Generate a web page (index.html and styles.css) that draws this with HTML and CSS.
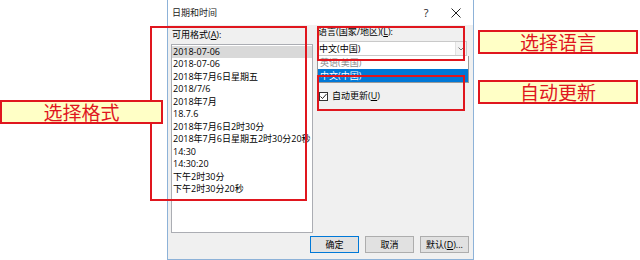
FILE: index.html
```html
<!DOCTYPE html>
<html lang="zh-CN">
<head>
  <meta charset="UTF-8">
  <meta name="viewport" content="width=device-width, initial-scale=1.0">
  <title>日期和时间</title>
  <link rel="stylesheet" href="styles.css">
</head>
<body>

  <div class="dialog">
    <div class="titlebar">
      <span class="title">日期和时间</span>
      <span class="title-btn">?</span>
      <span class="title-btn close">
        <svg width="10" height="10" viewBox="0 0 10 10"><path d="M0.5 0.5 L9.5 9.5 M9.5 0.5 L0.5 9.5" stroke="#222" stroke-width="1" fill="none"/></svg>
      </span>
    </div>

    <div class="body">
      <div class="panes">
        <div class="formats">
          <div class="label">可用格式(<u>A</u>):</div>
          <ul class="listbox">
            <li class="selected">2018-07-06</li>
            <li>2018-07-06</li>
            <li>2018年7月6日星期五</li>
            <li>2018/7/6</li>
            <li>2018年7月</li>
            <li>18.7.6</li>
            <li>2018年7月6日2时30分</li>
            <li>2018年7月6日星期五2时30分20秒</li>
            <li>14:30</li>
            <li>14:30:20</li>
            <li>下午2时30分</li>
            <li>下午2时30分20秒</li>
          </ul>
        </div>

        <div class="options">
          <div class="label">语言(国家/地区)(<u>L</u>):</div>
          <div class="combo-wrap">
            <div class="combo">
              <span>中文(中国)</span>
              <span class="arrow">
                <svg width="6" height="4" viewBox="0 0 6 4"><path d="M0.5 0.5 L3 3 L5.5 0.5" stroke="#777" stroke-width="1" fill="none"/></svg>
              </span>
            </div>
            <ul class="dropdown">
              <li class="faded">英语(美国)</li>
              <li class="current">中文(中国)</li>
            </ul>
          </div>
          <label class="check">
            <span class="box">
              <svg width="7" height="7" viewBox="0 0 7 7"><path d="M0.5 3.5 L2.5 5.5 L6.5 1" stroke="#222" stroke-width="1" fill="none"/></svg>
            </span>
            <span>自动更新(<u>U</u>)</span>
          </label>
        </div>
      </div>

      <div class="buttons">
        <button class="btn default">确定</button>
        <button class="btn">取消</button>
        <button class="btn">默认(<u>D</u>)...</button>
      </div>
    </div>
  </div>

  <!-- annotations drawn over the screenshot -->
  <div class="mark mark-formats"></div>
  <div class="mark mark-language"></div>
  <div class="mark mark-update"></div>

  <div class="callout callout-formats">选择格式</div>
  <div class="callout callout-language">选择语言</div>
  <div class="callout callout-update">自动更新</div>

</body>
</html>
```

FILE: styles.css
```css
html, body {
  margin: 0;
  padding: 0;
  overflow: hidden;
}

body {
  width: 640px;
  height: 260px;
  background-color: #fff;
  font-family: "Open Sans", "Noto Sans CJK SC", sans-serif;
  font-size: 9px;
  color: #000;
  position: relative;
}

ul {
  list-style: none;
  margin: 0;
  padding: 0;
}

.dialog {
  margin-left: 167px;
  width: 305px;
  height: 259px;
  border: 1px solid #8db2d8;
  border-top: none;
  display: flex;
  flex-direction: column;
}

.titlebar {
  height: 25px;
  background-color: #fff;
  display: flex;
  align-items: center;
  padding-right: 2px;
}

.title {
  flex: 1;
  padding-left: 4px;
  color: #222;
}

.title-btn {
  width: 30px;
  text-align: center;
  font-size: 11px;
  color: #222;
  display: flex;
  justify-content: center;
}

.body {
  flex: 1;
  background-color: #f0f0f0;
  display: flex;
  flex-direction: column;
}

.panes {
  display: flex;
  gap: 4px;
  padding-left: 3px;
  height: 208px;
}

.label {
  line-height: 12px;
  height: 12px;
  padding-left: 1px;
  margin-bottom: 3px;
  white-space: nowrap;
}

.formats {
  width: 142px;
  padding-top: 4px;
}

.listbox {
  box-sizing: border-box;
  height: 189px;
  background-color: #fff;
  border: 1px solid #abadb3;
  padding-top: 0.5px;
}

.listbox li {
  height: 12.5px;
  line-height: 12.5px;
  padding-left: 1px;
  white-space: nowrap;
  overflow: hidden;
}

.listbox li.selected {
  background-color: #d9d9d9;
}

.options {
  width: 152px;
  padding-top: 1px;
}

.combo-wrap {
  position: relative;
  width: 150px;
}

.combo {
  box-sizing: border-box;
  height: 15px;
  background-color: #fff;
  border: 1px solid #c9c9c9;
  display: flex;
  align-items: center;
  padding-left: 1px;
}

.combo span:first-child {
  flex: 1;
}

.arrow {
  width: 10px;
  height: 13px;
  background-color: #f3f3f3;
  border-left: 1px solid #e2e2e2;
  display: flex;
  align-items: center;
  justify-content: center;
}

.dropdown {
  position: absolute;
  top: 15px;
  left: 0;
  width: 152px;
  box-sizing: border-box;
  background-color: #fff;
  border: 1px solid #9a9a9a;
  border-top: none;
}

.dropdown li {
  height: 13px;
  line-height: 13px;
  padding-left: 2px;
  white-space: nowrap;
}

.dropdown li.faded {
  color: #8a8a8a;
}

.dropdown li.current {
  background-color: #0078d7;
  color: #fff;
}

.check {
  display: flex;
  align-items: center;
  gap: 4px;
  margin-top: 34px;
  padding-left: 2px;
  line-height: 12px;
}

.box {
  box-sizing: border-box;
  width: 9px;
  height: 9px;
  border: 1px solid #333;
  background-color: #fff;
  display: flex;
  align-items: center;
  justify-content: center;
}

.buttons {
  display: flex;
  justify-content: flex-end;
  gap: 6px;
  padding-right: 4px;
  margin-top: 3px;
}

.btn {
  box-sizing: border-box;
  width: 49px;
  height: 17px;
  padding: 0;
  font-family: "Open Sans", "Noto Sans CJK SC", sans-serif;
  font-size: 9px;
  color: #000;
  background-color: #e1e1e1;
  border: 1px solid #adadad;
}

.btn.default {
  border-color: #0078d7;
}

/* annotations */
.mark {
  position: absolute;
  box-sizing: border-box;
  border: 2px solid #e0161e;
}

.mark-formats {
  left: 150px;
  top: 26px;
  width: 157px;
  height: 175px;
}

.mark-language {
  left: 317px;
  top: 26px;
  width: 148px;
  height: 35px;
}

.mark-update {
  left: 317px;
  top: 75px;
  width: 148px;
  height: 36px;
}

.callout {
  position: absolute;
  box-sizing: border-box;
  height: 24px;
  border: 2px solid #e0161e;
  background-color: #ffffc6;
  color: #e0161e;
  font-family: "Noto Sans CJK SC", sans-serif;
  font-size: 19px;
  line-height: 20px;
  text-align: center;
}

.callout-formats {
  left: 0;
  top: 100px;
  width: 163px;
}

.callout-language {
  left: 478px;
  top: 30px;
  width: 160px;
}

.callout-update {
  left: 478px;
  top: 80px;
  width: 160px;
}
```
